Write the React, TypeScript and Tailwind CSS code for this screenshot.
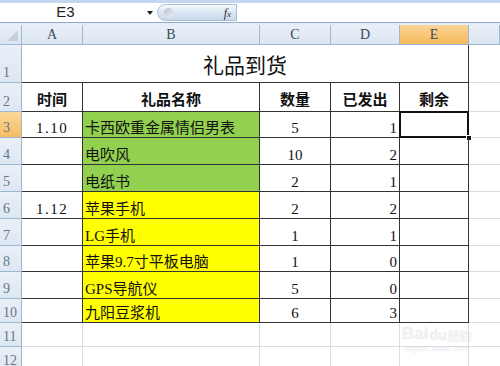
import React from 'react';

type Row = { a: string; b: string; c: string; d: string; fill: 'green' | 'yellow' };

const ROWS: Row[] = [
    { a: '1.10', b: '卡西欧重金属情侣男表', c: '5', d: '1', fill: 'green' },
    { a: '', b: '电吹风', c: '10', d: '2', fill: 'green' },
    { a: '', b: '电纸书', c: '2', d: '1', fill: 'green' },
    { a: '1.12', b: '苹果手机', c: '2', d: '2', fill: 'yellow' },
    { a: '', b: 'LG手机', c: '1', d: '1', fill: 'yellow' },
    { a: '', b: '苹果9.7寸平板电脑', c: '1', d: '0', fill: 'yellow' },
    { a: '', b: 'GPS导航仪', c: '5', d: '0', fill: 'yellow' },
    { a: '', b: '九阳豆浆机', c: '6', d: '3', fill: 'yellow' },
];

// heights of sheet rows 3..10
const DATA_H = ['h-[26px]', 'h-[27px]', 'h-[27px]', 'h-[27px]', 'h-[27px]', 'h-[26px]', 'h-[27px]', 'h-[24px]'];

const FONT = { fontFamily: '"Liberation Serif", "Noto Sans CJK SC", serif' };
const COLS = 'grid grid-cols-[22px_61px_177px_71px_69px_69px_31px]';

const RowHead: React.FC<{ n: number; active?: boolean; h: string }> = ({ n, active, h }) => (
    <div
        className={`${h} flex items-end pl-[3px] pb-[2px] text-[14px] leading-none text-[#66768a] border-r border-b border-[#9eb6ce] ${active ? 'bg-gradient-to-b from-[#fbd89a] to-[#f6bd62]' : 'bg-gradient-to-b from-[#eaf0f8] to-[#dde7f3]'}`}
    >
        {n}
    </div>
);

const App: React.FC = () => {
    return (
        <div className="w-[500px] h-[366px] overflow-hidden bg-white relative" style={FONT}>
            {/* formula bar */}
            <div className="h-[3px] bg-[#c4d7ee]" />
            <div className="h-[20px] flex items-stretch bg-white border-b border-[#8faacb]">
                <div className="w-[157px] flex items-center relative">
                    <span className="flex-1 text-center text-[15px] text-[#222] pr-[26px]" style={{ fontFamily: '"Liberation Sans", sans-serif' }}>E3</span>
                    <span className="absolute left-[147px] top-[8px] w-0 h-0 border-l-[3px] border-r-[3px] border-t-[4px] border-l-transparent border-r-transparent border-t-[#222]" />
                </div>
                <div className="w-[80px] my-[1px] rounded-l-full bg-gradient-to-b from-[#f4f8fd] via-[#dbe6f3] to-[#c9d8eb] border border-[#a9bdd6] flex items-center justify-between pl-[6px] pr-[5px]">
                    <span className="w-[10px] h-[10px] rounded-full bg-gradient-to-br from-[#b8c4d2] to-[#eef2f7]" />
                    <span className="italic text-[12px] text-[#333]" style={{ fontFamily: '"Liberation Serif", serif' }}>f<span className="text-[9px]">x</span></span>
                </div>
                <div className="flex-1 bg-white" />
            </div>
            <div className="h-[2px] bg-[#e6edf6]" />

            <div className={COLS}>
                {/* column headers */}
                <div className="h-[20px] bg-gradient-to-b from-[#eaf0f8] to-[#dbe5f1] border-r border-b border-[#9eb6ce] relative">
                    <span className="absolute right-[3px] bottom-[3px] w-0 h-0" style={{ borderBottom: '11px solid #c3cfde', borderLeft: '11px solid transparent' }} />
                </div>
                {['A', 'B', 'C', 'D', 'E', ''].map((c) => (
                    <div
                        key={c || 'F'}
                        className={`h-[20px] flex items-center justify-center text-[14px] text-[#3b4a5c] border-r border-b border-[#9eb6ce] ${c === 'E' ? 'bg-gradient-to-b from-[#fbd595] to-[#f5b95c]' : 'bg-gradient-to-b from-[#eaf0f8] to-[#dbe5f1]'}`}
                    >
                        {c}
                    </div>
                ))}

                {/* row 1: title */}
                <RowHead n={1} h="h-[38px]" />
                <div className="col-span-5 h-[38px] flex items-end justify-center pb-[2px] text-[21px] text-[#111] border-r border-b border-[#333]" style={{ fontFamily: '"Noto Sans CJK SC", sans-serif' }}>
                    礼品到货
                </div>
                <div className="h-[38px] border-b border-[#d8dee8]" />

                {/* row 2: headers */}
                <RowHead n={2} h="h-[29px]" />
                {['时间', '礼品名称', '数量', '已发出', '剩余'].map((t) => (
                    <div
                        key={t}
                        className="h-[29px] flex items-end justify-center pb-[1px] text-[15px] font-bold text-[#111] border-r border-b border-[#333]"
                        style={{ fontFamily: '"Noto Sans CJK SC", sans-serif' }}
                    >
                        {t}
                    </div>
                ))}
                <div className="h-[29px] border-b border-[#d8dee8]" />

                {/* data rows */}
                {ROWS.map((r, i) => {
                    const h = DATA_H[i];
                    return (
                        <React.Fragment key={i}>
                            <RowHead n={i + 3} h={h} active={i === 0} />
                            <div className={`${h} flex items-end justify-center pb-[1px] text-[15px] leading-none tracking-[1.5px] text-[#111] border-r border-b border-[#333]`}>
                                {r.a}
                            </div>
                            <div
                                className={`${h} flex items-end pl-[2px] pb-[1px] text-[15px] leading-none text-[#111] border-r border-b border-[#333] ${r.fill === 'green' ? 'bg-[#92d050]' : 'bg-[#ffff00]'}`}
                            >
                                {r.b}
                            </div>
                            <div className={`${h} flex items-end justify-center pb-[1px] text-[15px] leading-none text-[#111] border-r border-b border-[#333]`}>
                                {r.c}
                            </div>
                            <div className={`${h} flex items-end justify-end pr-[2px] pb-[1px] text-[15px] leading-none text-[#111] border-r border-b border-[#333]`}>
                                {r.d}
                            </div>
                            <div className={`${h} border-r border-b border-[#333] relative`}>
                                {i === 0 && (
                                    <>
                                        <span className="absolute -left-[1px] -top-[1px] -right-[1px] -bottom-[1px] border-2 border-[#111]" />
                                        <span className="absolute -right-[4px] -bottom-[4px] w-[6px] h-[6px] bg-[#111] border border-white" />
                                    </>
                                )}
                            </div>
                            <div className={`${h} border-b border-[#d8dee8]`} />
                        </React.Fragment>
                    );
                })}

                {/* empty rows */}
                {[11, 12].map((n) => (
                    <React.Fragment key={n}>
                        <RowHead n={n} h="h-[24px]" />
                        {[0, 1, 2, 3, 4].map((k) => (
                            <div key={k} className="h-[24px] border-r border-b border-[#d8dee8]" />
                        ))}
                        <div className="h-[24px] border-b border-[#d8dee8]" />
                    </React.Fragment>
                ))}
            </div>

            {/* watermark */}
            <div className="absolute left-[402px] top-[325px] flex flex-col items-center text-white/50 pointer-events-none" style={{ textShadow: '0 0 1px rgba(140,150,165,0.3)' }}>
                <div className="flex items-end gap-[1px]">
                    <span className="text-[17px] font-bold leading-none" style={{ fontFamily: '"Liberation Sans", sans-serif' }}>Bai</span>
                    <span className="text-[14px] font-bold leading-none" style={{ fontFamily: '"Liberation Sans", sans-serif' }}>du</span>
                    <span className="text-[12px] font-bold leading-none" style={{ fontFamily: '"Noto Sans CJK SC", sans-serif' }}>经验</span>
                </div>
                <div className="text-[8px] leading-none mt-[3px]" style={{ fontFamily: '"Liberation Sans", sans-serif' }}>jingyan.baidu.com</div>
            </div>
        </div>
    );
};

export default App;
